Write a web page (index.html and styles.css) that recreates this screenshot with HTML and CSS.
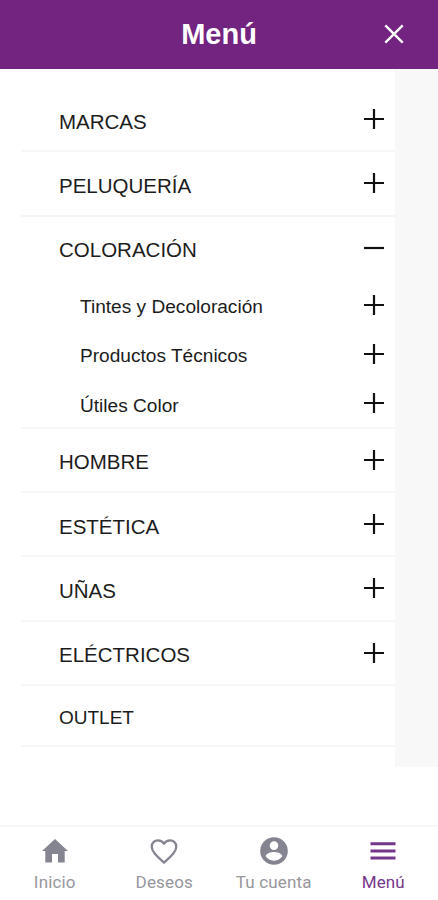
FILE: index.html
```html
<!DOCTYPE html>
<html lang="es">
<head>
<meta charset="utf-8">
<title>Menú</title>
<link rel="stylesheet" href="styles.css">
</head>
<body>
<svg class="symbols" aria-hidden="true">
  <symbol id="plus" viewBox="0 0 20 20"><path d="M0 10H20M10 0V20"/></symbol>
  <symbol id="minus" viewBox="0 0 20 20"><path d="M0 10H20"/></symbol>
</svg>
<header class="header">
  <h1 class="title">Menú</h1>
  <svg class="close" viewBox="0 0 20 20"><path d="M1.3 1.3 18.7 18.7M18.7 1.3 1.3 18.7"/></svg>
</header>
<main class="main">
  <nav class="menu">
    <div class="item"><span>MARCAS</span><svg class="toggle"><use href="#plus"/></svg></div>
    <div class="item"><span>PELUQUERÍA</span><svg class="toggle"><use href="#plus"/></svg></div>
    <div class="group">
      <div class="item open"><span>COLORACIÓN</span><svg class="toggle"><use href="#minus"/></svg></div>
      <div class="subitem"><span>Tintes y Decoloración</span><svg class="toggle"><use href="#plus"/></svg></div>
      <div class="subitem"><span>Productos Técnicos</span><svg class="toggle"><use href="#plus"/></svg></div>
      <div class="subitem"><span>Útiles Color</span><svg class="toggle"><use href="#plus"/></svg></div>
    </div>
    <div class="item"><span>HOMBRE</span><svg class="toggle"><use href="#plus"/></svg></div>
    <div class="item"><span>ESTÉTICA</span><svg class="toggle"><use href="#plus"/></svg></div>
    <div class="item"><span>UÑAS</span><svg class="toggle"><use href="#plus"/></svg></div>
    <div class="item"><span>ELÉCTRICOS</span><svg class="toggle"><use href="#plus"/></svg></div>
    <div class="item last"><span>OUTLET</span></div>
  </nav>
</main>
<footer class="tabs">
  <div class="tab">
    <svg class="icon" viewBox="0 0 32 32"><path class="fill" d="M16 4 29 16H25.700V27.500H19V19H13V27.500H6.300V16H3Z"/></svg>
    <span>Inicio</span>
  </div>
  <div class="tab">
    <svg class="icon" viewBox="0 0 32 32"><path class="line" d="M16 27.600C8 20.500 3.700 16.500 3.700 11.600 3.700 8 6.400 5.300 9.900 5.300 12.300 5.300 14.700 6.500 16 8.700 17.300 6.500 19.700 5.300 22.100 5.300 25.600 5.300 28.300 8 28.300 11.600 28.300 16.500 24 20.500 16 27.600Z"/></svg>
    <span>Deseos</span>
  </div>
  <div class="tab">
    <svg class="icon" viewBox="0 0 32 32"><path class="fill" fill-rule="evenodd" d="M16 2.200A13.800 13.800 0 1 0 16 29.800 13.800 13.800 0 1 0 16 2.200ZM16 6.300A4.300 4.300 0 1 1 16 14.900 4.300 4.300 0 1 1 16 6.300ZM16 25.700C12.500 25.700 9.500 24 7.700 21.300 7.800 18.600 13.200 17.100 16 17.100 18.800 17.100 24.200 18.600 24.300 21.300 22.500 24 19.500 25.700 16 25.700Z"/></svg>
    <span>Tu cuenta</span>
  </div>
  <div class="tab active">
    <svg class="icon" viewBox="0 0 32 32"><path class="fill" d="M3.500 7.300H28.500V10.300H3.500ZM3.500 14.400H28.500V17.400H3.500ZM3.500 21.500H28.500V24.500H3.500Z"/></svg>
    <span>Menú</span>
  </div>
</footer>
</body>
</html>
```
FILE: styles.css
```css
* { box-sizing: border-box; }
body {
  margin: 0;
  height: 900px;
  display: flex;
  flex-direction: column;
  background: #fff;
  color: #1c1c1c;
  font-family: "Liberation Sans", Arial, sans-serif;
  overflow: hidden;
}
.symbols { display: none; }
.header {
  flex: none;
  height: 68.5px;
  display: grid;
  grid-template-columns: 64px 1fr 64px;
  align-items: center;
  background: #732480;
  color: #fff;
}
.title {
  grid-column: 2;
  margin: 0;
  text-align: center;
  font-size: 29px;
  line-height: 34px;
  font-weight: 700;
}
.close {
  width: 20px;
  height: 20px;
  margin: -1px 0 0 10px;
  fill: none;
  stroke: #fff;
  stroke-width: 2.4;
}
.main {
  flex: none;
  height: 698px;
  padding-right: 43px;
  background: linear-gradient(to right, #fff 395px, #f8f8f8 395px);
}
.menu { padding: 19.500px 0 0 21px; }
.item {
  height: 64.300px;
  display: flex;
  align-items: center;
  justify-content: space-between;
  padding: 5px 11px 0 38px;
  border-bottom: 2px solid #f6f6f6;
  font-size: 20.500px;
  line-height: 24px;
}
.group { border-bottom: 2px solid #f6f6f6; }
.item.open { border-bottom: 0; height: 62.300px; }
.item.last { height: 61.500px; font-size: 19px; }
.subitem {
  height: 49.250px;
  display: flex;
  align-items: center;
  justify-content: space-between;
  padding: 7px 11px 0 59px;
  font-size: 19.100px;
  line-height: 24px;
}
.toggle {
  width: 20px;
  height: 20px;
  margin-top: -5px;
  fill: none;
  stroke: #111;
  stroke-width: 2.2;
}
.tabs {
  margin-top: auto;
  flex: none;
  height: 75px;
  display: grid;
  grid-template-columns: repeat(4, 1fr);
  border-top: 2px solid #f7f7f7;
  font-family: Roboto, sans-serif;
  font-size: 17px;
  line-height: 20px;
  letter-spacing: .15px;
  color: #96969c;
}
.tab {
  display: flex;
  flex-direction: column;
  align-items: center;
  padding-top: 8px;
  gap: 5px;
}
.icon { width: 32px; height: 32px; color: #858592; }
.fill { fill: currentColor; }
.line { fill: none; stroke: currentColor; stroke-width: 2.3; stroke-linejoin: round; }
.active, .active .icon { color: #75378a; }
```
